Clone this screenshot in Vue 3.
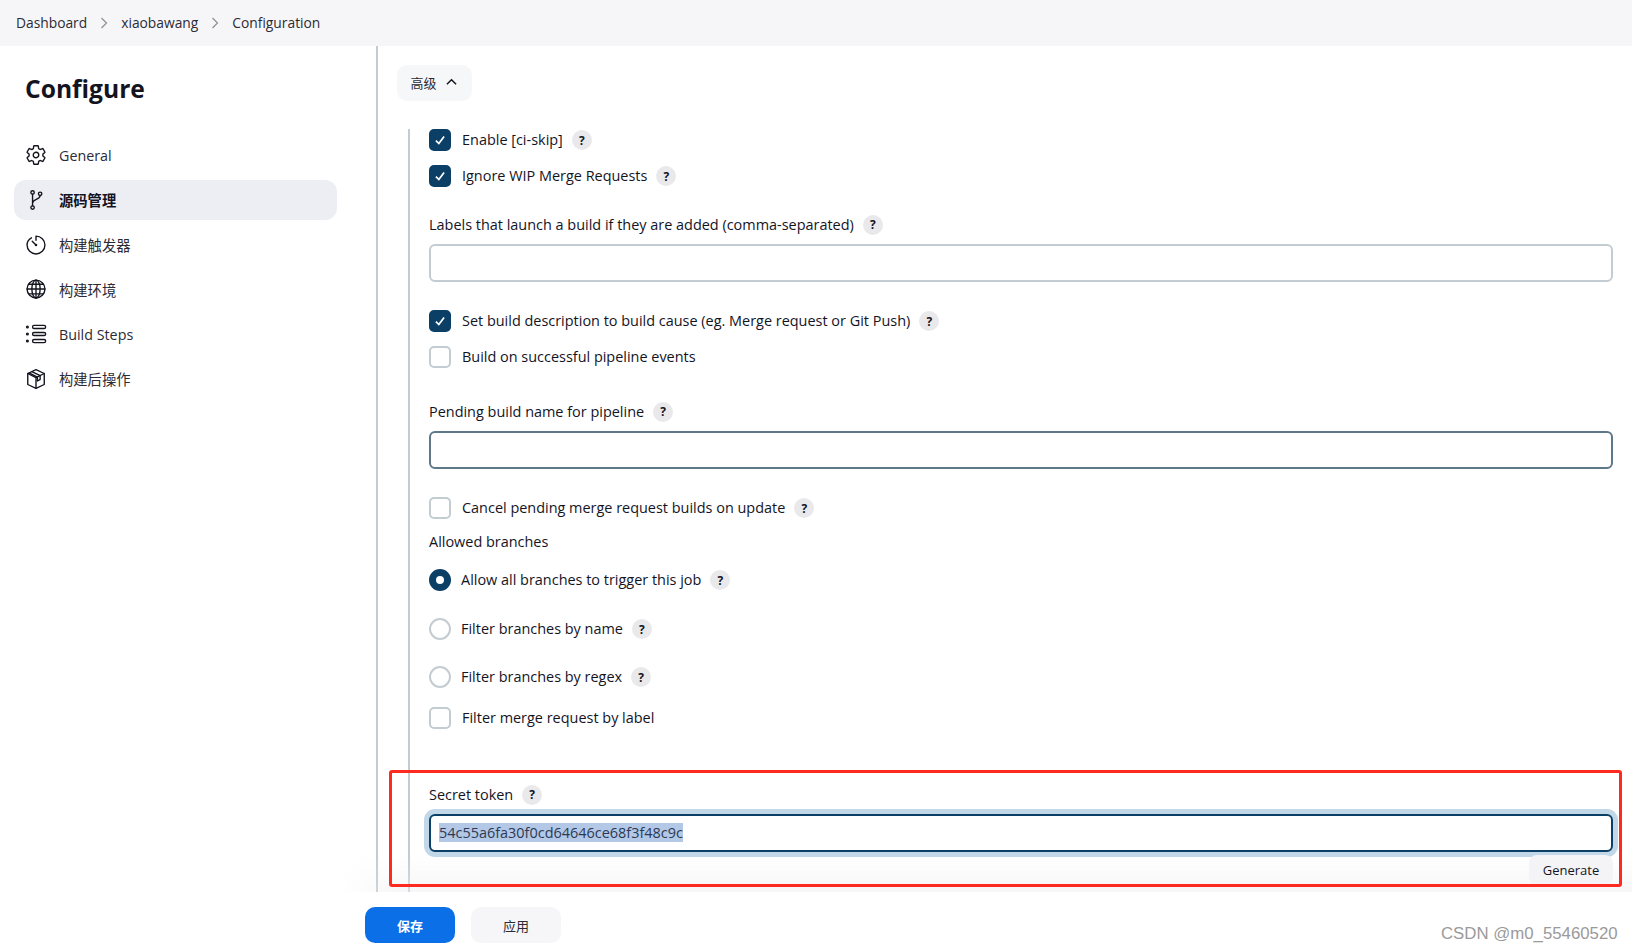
<script setup>
const crumbs = ["Dashboard", "xiaobawang", "Configuration"];

const nav = [
  { key: "gear", label: "General" },
  { key: "branch", label: "源码管理", active: true },
  { key: "timer", label: "构建触发器" },
  { key: "globe", label: "构建环境" },
  { key: "list", label: "Build Steps" },
  { key: "box", label: "构建后操作" },
];
</script>

<template>
  <div class="page">
    <header class="crumbs">
      <template v-for="(c, i) in crumbs" :key="c">
        <svg v-if="i > 0" class="chev" viewBox="0 0 8 12"><path d="M1.5 1 L6.5 6 L1.5 11" /></svg>
        <span>{{ c }}</span>
      </template>
    </header>

    <div class="body">
      <aside class="side">
        <h1 class="title">Configure</h1>
        <nav class="nav">
          <a v-for="n in nav" :key="n.key" class="nav-item" :class="{ active: n.active }">
            <svg class="nav-icon" viewBox="0 0 512 512">
              <template v-if="n.key === 'gear'">
                <path d="M262.29 192.31a64 64 0 1057.4 57.4 64.13 64.13 0 00-57.4-57.4zM416.39 256a154.34 154.34 0 01-1.53 20.79l45.21 35.46a10.81 10.81 0 012.45 13.75l-42.77 74a10.81 10.81 0 01-13.14 4.59l-44.9-18.08a16.11 16.11 0 00-15.17 1.75A164.48 164.48 0 01325 400.8a15.94 15.94 0 00-8.82 12.14l-6.73 47.89a11.08 11.08 0 01-10.68 9.17h-85.54a11.11 11.11 0 01-10.69-8.87l-6.72-47.82a16.07 16.07 0 00-9-12.22 155.3 155.3 0 01-21.46-12.57 16 16 0 00-15.11-1.71l-44.89 18.07a10.81 10.81 0 01-13.14-4.58l-42.77-74a10.8 10.8 0 012.45-13.75l38.21-30a16.05 16.05 0 006-14.08c-.36-4.17-.58-8.33-.58-12.5s.21-8.27.58-12.35a16 16 0 00-6.07-13.94l-38.19-30A10.81 10.81 0 0149.48 186l42.77-74a10.81 10.81 0 0113.14-4.59l44.9 18.08a16.11 16.11 0 0015.17-1.75A164.48 164.48 0 01187 111.2a15.94 15.94 0 008.82-12.14l6.73-47.89A11.08 11.08 0 01213.23 42h85.54a11.11 11.11 0 0110.69 8.87l6.72 47.82a16.07 16.07 0 009 12.22 155.3 155.3 0 0121.46 12.57 16 16 0 0015.11 1.71l44.89-18.07a10.81 10.81 0 0113.14 4.58l42.77 74a10.8 10.8 0 01-2.45 13.75l-38.21 30a16.05 16.05 0 00-6.05 14.08c.33 4.14.55 8.3.55 12.47z" />
              </template>
              <template v-else-if="n.key === 'branch'">
                <circle cx="176" cy="80" r="40" />
                <circle cx="176" cy="432" r="40" />
                <circle cx="352" cy="112" r="40" />
                <path d="M176 120v272M352 152c0 110-176 70-176 180" />
              </template>
              <template v-else-if="n.key === 'timer'">
                <path d="M150 88C90 122 48 184 48 256c0 115 93 208 208 208s208-93 208-208S371 48 256 48v96" />
                <path d="M168 168l88 88" />
                <circle cx="256" cy="256" r="14" />
              </template>
              <template v-else-if="n.key === 'globe'">
                <circle cx="256" cy="256" r="208" />
                <ellipse cx="256" cy="256" rx="96" ry="208" />
                <path d="M256 48v416M48 256h416M84 144h344M84 368h344" />
              </template>
              <template v-else-if="n.key === 'list'">
                <rect x="176" y="56" width="304" height="72" rx="36" />
                <rect x="176" y="220" width="304" height="72" rx="36" />
                <rect x="176" y="384" width="304" height="72" rx="36" />
                <circle cx="56" cy="92" r="20" />
                <circle cx="56" cy="256" r="20" />
                <circle cx="56" cy="420" r="20" />
              </template>
              <template v-else>
                <path d="M256 40L64 128v256l192 88 192-88V128z" />
                <path d="M64 128l192 96 192-96M256 224v248" />
                <path d="M160 84l192 96v90l-64 32v-90L96 116" />
              </template>
            </svg>
            <span>{{ n.label }}</span>
          </a>
        </nav>
      </aside>

      <main class="main">
        <button class="advanced">
          <span>高级</span>
          <svg class="up" viewBox="0 0 12 8"><path d="M1 6.5 L6 1.5 L11 6.5" /></svg>
        </button>

        <section class="nested">
          <div class="check-row">
            <span class="box on"><svg viewBox="0 0 12 12"><path d="M2.5 6.5 L5 9 L9.5 3" /></svg></span>
            <span class="text">Enable [ci-skip]</span>
            <span class="help">?</span>
          </div>
          <div class="check-row gap-14">
            <span class="box on"><svg viewBox="0 0 12 12"><path d="M2.5 6.5 L5 9 L9.5 3" /></svg></span>
            <span class="text">Ignore WIP Merge Requests</span>
            <span class="help">?</span>
          </div>

          <div class="label gap-28">Labels that launch a build if they are added (comma-separated)<span class="help">?</span></div>
          <input class="input" type="text" />

          <div class="check-row gap-28">
            <span class="box on"><svg viewBox="0 0 12 12"><path d="M2.5 6.5 L5 9 L9.5 3" /></svg></span>
            <span class="text">Set build description to build cause (eg. Merge request or Git Push)</span>
            <span class="help">?</span>
          </div>
          <div class="check-row gap-14">
            <span class="box"></span>
            <span class="text">Build on successful pipeline events</span>
          </div>

          <div class="label gap-34">Pending build name for pipeline<span class="help">?</span></div>
          <input class="input hover" type="text" />

          <div class="check-row gap-28">
            <span class="box"></span>
            <span class="text">Cancel pending merge request builds on update</span>
            <span class="help">?</span>
          </div>

          <div class="label gap-13">Allowed branches</div>

          <div class="check-row gap-17">
            <span class="radio on"></span>
            <span class="text">Allow all branches to trigger this job</span>
            <span class="help">?</span>
          </div>
          <div class="check-row gap-27">
            <span class="radio"></span>
            <span class="text">Filter branches by name</span>
            <span class="help">?</span>
          </div>
          <div class="check-row gap-26">
            <span class="radio"></span>
            <span class="text">Filter branches by regex</span>
            <span class="help">?</span>
          </div>
          <div class="check-row gap-19">
            <span class="box"></span>
            <span class="text">Filter merge request by label</span>
          </div>

          <div class="label gap-56">Secret token<span class="help">?</span></div>
          <div class="input focused"><span class="picked">54c55a6fa30f0cd64646ce68f3f48c9c</span></div>
          <div class="gen-row">
            <button class="generate">Generate</button>
          </div>
        </section>
      </main>
    </div>

    <footer class="footer">
      <button class="btn save">保存</button>
      <button class="btn apply">应用</button>
    </footer>

    <div class="red-box"></div>
    <div class="mark">CSDN @m0_55460520</div>
  </div>
</template>

<style scoped>
.page {
  position: relative;
  width: 1632px;
  height: 950px;
  overflow: hidden;
  background: #fff;
  color: #14141f;
  font-family: "Open Sans", "Noto Sans CJK SC", sans-serif;
  font-size: 14.45px;
}

.crumbs {
  height: 46px;
  background: #f6f6f8;
  display: flex;
  align-items: center;
  padding-left: 16px;
  padding-bottom: 2px;
  box-sizing: border-box;
  gap: 13px;
  color: #2b2b36;
  font-size: 13.8px;
}

.chev {
  width: 8px;
  height: 12px;
  margin: 1px 0 0;
}

.chev path {
  fill: none;
  stroke: #8e8e96;
  stroke-width: 1.2;
}

.body {
  display: flex;
  height: 904px;
}

.side {
  width: 376px;
  flex-shrink: 0;
  border-right: 2px solid #c3ccd1;
}

.title {
  margin: 26px 0 0 25px;
  font-size: 24.6px;
  line-height: 34px;
  font-weight: 700;
}

.nav {
  margin: 29px 0 0 14px;
  width: 323px;
  font-size: 14.3px;
}

.nav-item {
  display: flex;
  align-items: center;
  height: 40px;
  margin-bottom: 4.75px;
  padding-left: 11px;
  gap: 12px;
  border-radius: 12px;
  color: #2b2b36;
}

.nav-item.active {
  background: #eceef3;
  color: #14141f;
  font-weight: 600;
}

.nav-icon {
  width: 22px;
  height: 22px;
  flex-shrink: 0;
}

.nav-icon * {
  fill: none;
  stroke: #14141f;
  stroke-width: 32;
  stroke-linecap: round;
  stroke-linejoin: round;
}

.main {
  flex: 1;
  padding: 19px 19px 0;
}

.advanced {
  display: flex;
  align-items: center;
  justify-content: center;
  gap: 9px;
  width: 75px;
  height: 36px;
  padding: 0 2px 2px 0;
  border: none;
  border-radius: 10px;
  background: #f6f7f9;
  color: #2b2b36;
  font: inherit;
  font-size: 13px;
}

.up {
  width: 11px;
  height: 8px;
}

.up path {
  fill: none;
  stroke: #14141f;
  stroke-width: 1.6;
}

.nested {
  margin: 28px 0 0 11px;
  padding-left: 19px;
  border-left: 2px solid #c3ccd1;
  height: 800px;
}

.check-row {
  display: flex;
  align-items: center;
  height: 22px;
}

.text {
  margin-top: -2px;
}

.box {
  width: 22px;
  height: 22px;
  box-sizing: border-box;
  border: 2px solid #c3ccd1;
  border-radius: 5px;
  margin-right: 11px;
  flex-shrink: 0;
}

.box.on {
  background: #0b3f66;
  border-color: #0b3f66;
  display: flex;
  align-items: center;
  justify-content: center;
}

.box svg {
  width: 14px;
  height: 14px;
}

.box svg path {
  fill: none;
  stroke: #fff;
  stroke-width: 1.5;
}

.radio {
  width: 22px;
  height: 22px;
  box-sizing: border-box;
  border: 2px solid #c3ccd1;
  border-radius: 50%;
  margin-right: 10px;
  flex-shrink: 0;
}

.radio.on {
  border: 7.5px solid #0b3f66;
  background: #fff;
}

.help {
  display: inline-flex;
  align-items: center;
  justify-content: center;
  width: 20px;
  height: 20px;
  margin-left: 9px;
  border-radius: 50%;
  background: #e9e9ec;
  color: #14141f;
  font-size: 12px;
  font-weight: 700;
}

.label {
  height: 20px;
  line-height: 20px;
  display: flex;
  align-items: center;
}

.input {
  display: block;
  width: 1184px;
  height: 38px;
  margin-top: 9px;
  box-sizing: border-box;
  border: 2px solid #c3ccd1;
  border-radius: 6px;
  background: #fff;
  outline: none;
  font: inherit;
}

.input.hover {
  border-color: #5c7889;
}

.input.focused {
  border-color: #0b3f66;
  box-shadow: 0 0 0 5px #c2d8e8;
  padding-left: 8px;
  line-height: 34px;
}

.picked {
  background: #b3c8e6;
  color: #2b3a55;
}

.gen-row {
  display: flex;
  justify-content: flex-end;
  width: 1184px;
  margin-top: 3px;
  position: relative;
  z-index: 1;
}

.generate {
  width: 84px;
  height: 30px;
  padding: 0;
  border: none;
  border-radius: 8px;
  background: #f4f4f7;
  color: #14141f;
  font: inherit;
  font-size: 13px;
}

.gap-13 { margin-top: 13px; }
.gap-14 { margin-top: 14px; }
.gap-17 { margin-top: 17px; }
.gap-19 { margin-top: 19px; }
.gap-26 { margin-top: 26px; }
.gap-27 { margin-top: 27px; }
.gap-28 { margin-top: 28px; }
.gap-34 { margin-top: 34px; }
.gap-56 { margin-top: 56px; }

/* bottom bar over the form */
.footer {
  position: absolute;
  left: 340px;
  right: 0;
  bottom: 0;
  height: 58px;
  box-sizing: border-box;
  background: #fff;
  display: flex;
  align-items: flex-start;
  gap: 16px;
  padding: 15px 0 0 25px;
}

.footer::before {
  content: "";
  position: absolute;
  left: 0;
  right: 0;
  top: -36px;
  height: 36px;
  background: linear-gradient(to bottom, rgba(236, 236, 240, 0), rgba(236, 236, 240, 0.45));
  -webkit-mask-image: linear-gradient(to right, transparent, #000 60px);
  mask-image: linear-gradient(to right, transparent, #000 60px);
}

.btn {
  width: 90px;
  height: 36px;
  padding: 0;
  border: none;
  border-radius: 10px;
  font: inherit;
  font-size: 13px;
}

.save {
  background: #0b6fe8;
  color: #fff;
  font-weight: 700;
}

.apply {
  background: #f6f6f8;
  color: #2b2b36;
}

.red-box {
  position: absolute;
  z-index: 3;
  left: 389px;
  top: 770px;
  width: 1233px;
  height: 117px;
  box-sizing: border-box;
  border: 3px solid #ff2a1f;
  border-radius: 3px;
  pointer-events: none;
}

.mark {
  position: absolute;
  z-index: 3;
  left: 1441px;
  top: 924px;
  color: #9a9a9a;
  font-family: "Liberation Sans", sans-serif;
  font-size: 16.8px;
  line-height: 20px;
  white-space: nowrap;
}
</style>
